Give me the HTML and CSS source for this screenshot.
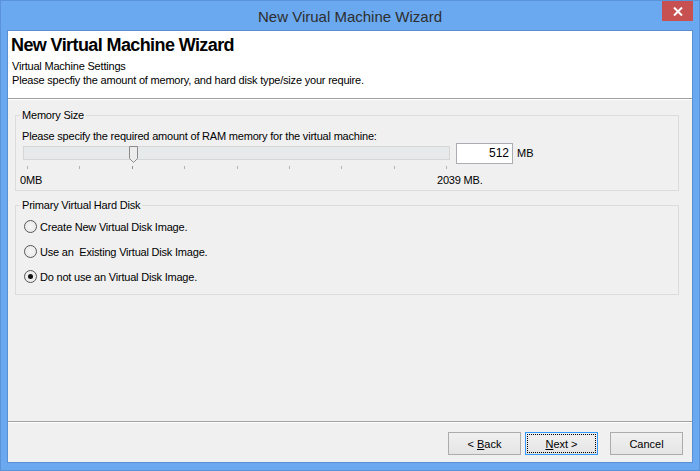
FILE: index.html
```html
<!DOCTYPE html>
<html>
<head>
<meta charset="utf-8">
<link rel="stylesheet" href="styles.css">
</head>
<body>
<div class="window">
  <div class="titlebar">
    <div></div>
    <div class="title">New Virual Machine Wizard</div>
    <div class="close"><svg width="10" height="9" viewBox="0 0 10 9"><path d="M1 0.5 L9 8.5 M9 0.5 L1 8.5" stroke="#fff" stroke-width="2"/></svg></div>
  </div>
  <div class="client">
    <div class="header">
      <h1>New Virtual Machine Wizard</h1>
      <p>Virtual Machine Settings</p>
      <p>Please specfiy the amount of memory, and hard disk type/size your require.</p>
    </div>
    <div class="sep"></div>
    <div class="content">
      <fieldset class="group mem">
        <legend>Memory Size</legend>
        <div class="prompt">Please specify the required amount of RAM memory for the virtual machine:</div>
        <div class="slider-row">
          <div class="track">
            <svg class="thumb" width="9" height="17" viewBox="0 0 9 17"><path d="M0.5 0.5 H8.5 V12.5 L4.5 16.5 L0.5 12.5 Z" fill="#ececec" stroke="#8a8a8a"/></svg>
          </div>
          <div class="textbox">512</div>
          <span class="unit">MB</span>
        </div>
        <div class="ticks">
          <span></span><span></span><span class="dark"></span><span></span><span></span><span></span><span></span><span></span><span></span>
        </div>
        <div class="scale"><span class="min">0MB</span><span>2039 MB.</span></div>
      </fieldset>
      <fieldset class="group disk">
        <legend>Primary Virtual Hard Disk</legend>
        <label class="radio"><span class="dot"></span><span>Create New Virtual Disk Image.</span></label>
        <label class="radio"><span class="dot"></span><span>Use an&nbsp; Existing Virtual Disk Image.</span></label>
        <label class="radio checked"><span class="dot"></span><span>Do not use an Virtual Disk Image.</span></label>
      </fieldset>
    </div>
    <div class="sep"></div>
    <div class="footer">
      <button class="btn back"><span>&lt;&nbsp;<u>B</u>ack</span></button>
      <button class="btn next"><span class="focus"><span><u>N</u>ext&nbsp;&gt;</span></span></button>
      <button class="btn cancel"><span>Cancel</span></button>
    </div>
  </div>
</div>
</body>
</html>
```
FILE: styles.css
```css
* { box-sizing: border-box; }
html, body { margin: 0; padding: 0; }
body {
  width: 700px;
  height: 471px;
  overflow: hidden;
  font-family: "Liberation Sans", Arial, sans-serif;
  font-size: 11px;
  letter-spacing: -0.2px;
  color: #000;
}
.window {
  width: 700px;
  height: 471px;
  background: #6aa9ef;
  border: 1px solid #5a93d8;
  display: flex;
  flex-direction: column;
}
.titlebar {
  height: 29px;
  display: grid;
  grid-template-columns: 1fr auto 1fr;
  align-items: start;
}
.title {
  font-size: 15px;
  letter-spacing: 0;
  color: #2e2e2e;
  line-height: 29px;
  padding-top: 1px;
}
.close {
  justify-self: end;
  width: 31px;
  height: 20px;
  margin-right: 6px;
  background: #c75050;
  display: flex;
  align-items: center;
  justify-content: center;
}
.client {
  margin: 0 6px;
  height: 433px;
  border: 1px solid #5b8fd4;
  background: #f0f0f0;
  display: flex;
  flex-direction: column;
}
.header {
  height: 67px;
  background: #fff;
  padding: 4px 0 0 3px;
}
.header h1 {
  margin: 0 0 4px 0;
  font-size: 18px;
  letter-spacing: -0.6px;
  line-height: 20px;
  font-weight: bold;
}
.header p {
  margin: 0 0 0 1px;
  line-height: 14px;
}
.sep {
  height: 2px;
  border-top: 1px solid #a0a0a0;
  border-bottom: 1px solid #fff;
}
.content {
  flex: 1;
  padding: 0 13px 0 7px;
}
.group {
  margin: 9px 0 0 0;
  border: 1px solid #dcdcdc;
  padding: 8px 6px 3px 6px;
  min-width: 0;
}
.group legend {
  padding: 0 2px;
  margin-left: -2px;
  line-height: 13px;
}
.prompt { line-height: 13px; }
.slider-row {
  display: flex;
  align-items: flex-start;
  height: 21px;
}
.track {
  position: relative;
  margin: 3px 0 0 1px;
  width: 427px;
  height: 14px;
  background: #e7eaea;
  border: 1px solid #d6d6d6;
}
.thumb {
  position: absolute;
  left: 105px;
  top: -1px;
}
.textbox {
  margin-left: 6px;
  width: 57px;
  height: 21px;
  border: 1px solid #abadb3;
  background: #fff;
  text-align: right;
  font-size: 12px;
  letter-spacing: 0;
  line-height: 19px;
  padding-right: 3px;
}
.unit {
  margin-left: 4px;
  font-size: 11px;
  letter-spacing: 0;
  line-height: 20px;
}
.ticks {
  display: flex;
  justify-content: space-between;
  width: 420px;
  margin: 2px 0 0 5px;
  height: 3px;
}
.ticks span {
  width: 1px;
  height: 3px;
  background: #b4b4b4;
}
.ticks span.dark { background: #909090; }
.scale {
  display: flex;
  margin: 5px 0 0 -2px;
  line-height: 13px;
}
.scale .min { width: 417px; }
.disk { padding: 2px 6px 5px 6px; margin-top: 8px; }
.radio {
  display: flex;
  align-items: center;
  height: 25px;
}
.dot {
  width: 13px;
  height: 13px;
  margin: 0 3px 0 2px;
  border: 1px solid #555;
  border-radius: 50%;
  background: radial-gradient(circle, #f6f6f6 0%, #ececec 60%, #f8f8f8 100%);
  display: flex;
  align-items: center;
  justify-content: center;
}
.checked .dot::after {
  content: "";
  width: 5px;
  height: 5px;
  border-radius: 50%;
  background: #111;
}
.footer {
  height: 39px;
  display: flex;
  justify-content: flex-end;
  align-items: flex-start;
  padding: 9px 9px 0 0;
}
.btn {
  width: 73px;
  height: 23px;
  border: 1px solid #acacac;
  background: linear-gradient(#f0f0f0, #e5e5e5);
  font-family: "Liberation Sans", Arial, sans-serif;
  font-size: 11px;
  letter-spacing: 0;
  color: #000;
  padding: 0;
  margin: 0;
  display: flex;
  align-items: center;
  justify-content: center;
}
.back { margin-right: 4px; }
.next {
  border-color: #3399ff;
  margin-right: 12px;
  padding: 1px;
}
.focus {
  width: 100%;
  height: 100%;
  border: 1px dotted #000;
  display: flex;
  align-items: center;
  justify-content: center;
}
```
